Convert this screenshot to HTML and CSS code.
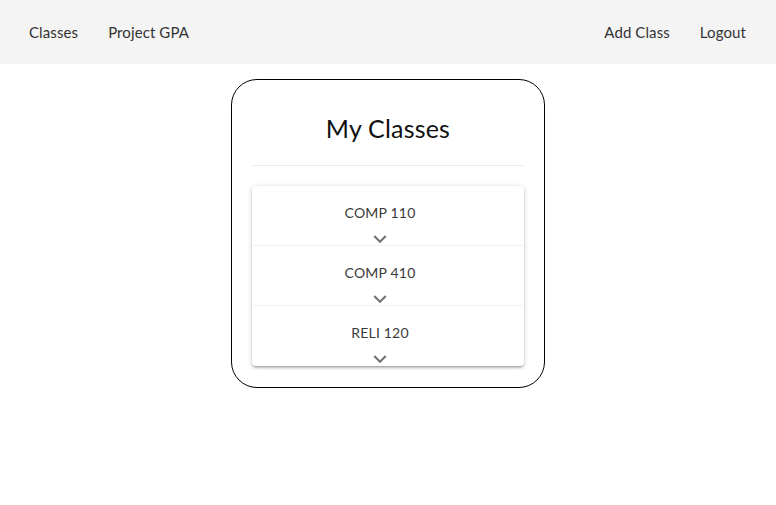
FILE: index.html
```html
<!DOCTYPE html>
<html>
<head>
<meta charset="utf-8">
<link rel="stylesheet" href="styles.css">
</head>
<body>
<nav class="nav">
  <div class="nav-left">
    <a class="nav-link">Classes</a>
    <a class="nav-link">Project GPA</a>
  </div>
  <div class="nav-right">
    <a class="nav-link">Add Class</a>
    <a class="nav-link">Logout</a>
  </div>
</nav>
<main class="main">
  <section class="card">
    <h1 class="title">My Classes</h1>
    <hr class="divider">
    <ul class="list">
      <li class="item"><span class="item-name">COMP 110</span><svg class="chev" viewBox="0 0 24 24"><path d="M16.59 8.59L12 13.17 7.41 8.59 6 10l6 6 6-6z"/></svg></li>
      <li class="item"><span class="item-name">COMP 410</span><svg class="chev" viewBox="0 0 24 24"><path d="M16.59 8.59L12 13.17 7.41 8.59 6 10l6 6 6-6z"/></svg></li>
      <li class="item"><span class="item-name">RELI 120</span><svg class="chev" viewBox="0 0 24 24"><path d="M16.59 8.59L12 13.17 7.41 8.59 6 10l6 6 6-6z"/></svg></li>
    </ul>
  </section>
</main>
</body>
</html>
```
FILE: styles.css
```css
* { box-sizing: border-box; }
body {
  margin: 0;
  font-family: Lato, "Noto Sans", sans-serif;
  color: #333;
  background: #fff;
}
.nav {
  height: 64px;
  background: #f4f4f4;
  display: flex;
  justify-content: space-between;
  align-items: center;
  padding: 0 15px;
}
.nav-left, .nav-right { display: flex; }
.nav-link {
  font-size: 15px;
  padding: 0 15px;
  color: #333;
  letter-spacing: 0.1px;
}
.nav-left .nav-link:first-child { padding-left: 14px; }
.main {
  display: flex;
  justify-content: center;
  padding-top: 15px;
}
.card {
  width: 314px;
  border: 1px solid #000;
  border-radius: 26px;
  padding: 0 20px 21px;
}
.title {
  font-weight: 400;
  font-size: 25px;
  text-align: center;
  margin: 33px 0 0;
  line-height: 30px;
  color: #111;
  letter-spacing: 0.2px;
}
.divider {
  border: 0;
  border-top: 1px solid #ebebeb;
  margin: 22px 0 20px;
}
.list {
  list-style: none;
  margin: 0;
  padding: 0;
  border-radius: 4px;
  box-shadow: 0 2px 2px 0 rgba(0,0,0,0.14), 0 3px 1px -2px rgba(0,0,0,0.12), 0 1px 5px 0 rgba(0,0,0,0.2);
}
.item {
  height: 60px;
  display: flex;
  flex-direction: column;
  align-items: center;
  padding: 18px 16px 0 0;
  border-bottom: 1px solid #f2f2f2;
}
.item:last-child { border-bottom: 0; }
.item-name {
  font-size: 14px;
  line-height: 18px;
  color: #3a3a3a;
  letter-spacing: 0.2px;
}
.chev {
  flex: none;
  width: 26px;
  height: 26px;
  fill: #757575;
  margin-top: 4px;
  margin-bottom: -10px;
}
```
